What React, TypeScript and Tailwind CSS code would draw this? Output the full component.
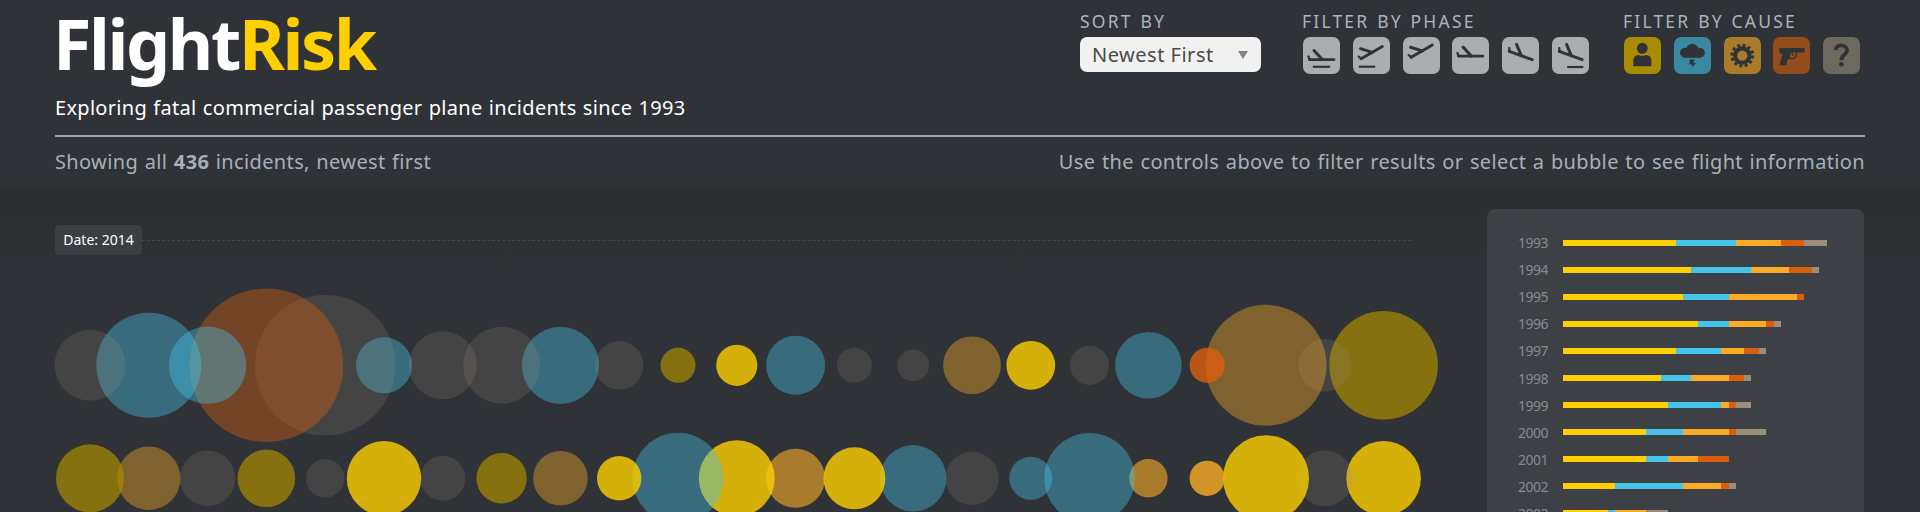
import React from 'react';

type Cause = 'human' | 'weather' | 'mechanical' | 'criminal' | 'unknown';
type Tone = Cause | 'humanDim';

interface Bubble {
  r: number;
  tone: Tone;
  opacity: number;
}

const COLORS: Record<Tone, string> = {
  human: '#ffcf00',
  humanDim: '#aa8b00',
  weather: '#45c3e8',
  mechanical: '#fbab26',
  criminal: '#d95f0e',
  unknown: '#998d7b',
};

const b = (r: number, tone: Tone, opacity: number): Bubble => ({ r, tone, opacity });

const BUBBLE_ROWS: { cy: number; items: Bubble[] }[] = [
  {
    cy: 365.3,
    items: [
      b(35.5, 'unknown', 0.2),
      b(52.5, 'weather', 0.4),
      b(38.7, 'weather', 0.4),
      b(76.8, 'criminal', 0.4),
      b(70.3, 'unknown', 0.2),
      b(28, 'weather', 0.4),
      b(34, 'unknown', 0.2),
      b(38.5, 'unknown', 0.2),
      b(38.6, 'weather', 0.4),
      b(24.2, 'unknown', 0.2),
      b(17.5, 'humanDim', 0.7),
      b(20.6, 'human', 0.8),
      b(29.5, 'weather', 0.4),
      b(17.5, 'unknown', 0.2),
      b(16, 'unknown', 0.2),
      b(28.9, 'mechanical', 0.4),
      b(24.4, 'human', 0.8),
      b(19.6, 'unknown', 0.2),
      b(33.3, 'weather', 0.4),
      b(17.6, 'criminal', 0.8),
      b(60.5, 'mechanical', 0.4),
      b(26.4, 'unknown', 0.2),
      b(54.3, 'humanDim', 0.7),
    ],
  },
  {
    cy: 478.3,
    items: [
      b(34, 'humanDim', 0.7),
      b(31.7, 'mechanical', 0.4),
      b(27.8, 'unknown', 0.2),
      b(28.8, 'humanDim', 0.7),
      b(19.2, 'unknown', 0.2),
      b(37.2, 'human', 0.8),
      b(22.5, 'unknown', 0.2),
      b(25.2, 'humanDim', 0.7),
      b(27.3, 'mechanical', 0.4),
      b(22.2, 'human', 0.8),
      b(45.5, 'weather', 0.4),
      b(38, 'human', 0.8),
      b(29.5, 'mechanical', 0.6),
      b(31, 'human', 0.8),
      b(33.2, 'weather', 0.4),
      b(26.7, 'unknown', 0.2),
      b(21.5, 'weather', 0.4),
      b(45.3, 'weather', 0.4),
      b(19.2, 'mechanical', 0.6),
      b(17.6, 'mechanical', 0.8),
      b(43, 'human', 0.8),
      b(28, 'unknown', 0.2),
      b(37.3, 'human', 0.8),
    ],
  },
];

const CAUSE_ORDER: Cause[] = ['human', 'weather', 'mechanical', 'criminal', 'unknown'];

const YEARS: { year: number; counts: number[] }[] = [
  { year: 1993, counts: [15, 8, 6, 3, 3] },
  { year: 1994, counts: [17, 8, 5, 3, 1] },
  { year: 1995, counts: [16, 6, 9, 1, 0] },
  { year: 1996, counts: [18, 4, 5, 1, 1] },
  { year: 1997, counts: [15, 6, 3, 2, 1] },
  { year: 1998, counts: [13, 4, 5, 2, 1] },
  { year: 1999, counts: [14, 7, 1, 1, 2] },
  { year: 2000, counts: [11, 5, 6, 1, 4] },
  { year: 2001, counts: [11, 3, 4, 4, 0] },
  { year: 2002, counts: [7, 9, 5, 1, 1] },
  { year: 2003, counts: [6, 1, 4, 0, 3] },
];

const UNIT = 7.55;

interface Phase {
  label: string;
  y: number;
  angle: number;
  // x start, x end, y
  runway?: [number, number, number];
}

const PHASES: Phase[] = [
  { label: 'Standing', y: 22, angle: 0, runway: [9.5, 26.5, 29] },
  { label: 'Takeoff', y: 15.2, angle: -30, runway: [5.6, 21.6, 28.9] },
  { label: 'Initial climb', y: 13.8, angle: -30 },
  { label: 'En route', y: 18.6, angle: 0 },
  { label: 'Approach', y: 18, angle: 20 },
  { label: 'Landing', y: 18, angle: 20, runway: [14.8, 30.5, 29.2] },
];

const PhaseIcon: React.FC<{ phase: Phase }> = ({ phase }) => (
  <svg viewBox="0 0 36 36" className="h-full w-full" fill="none" stroke="#2f3236">
    <g transform={`translate(18.3 ${phase.y}) rotate(${phase.angle})`}>
      <path d="M-12 0H11.8" strokeWidth="2.8" strokeLinecap="round" />
      <path d="M-11.8 0L-13-3" strokeWidth="2.2" strokeLinecap="round" />
      <path d="M0.5 0L-7.6-8.8" strokeWidth="2.9" strokeLinecap="round" />
    </g>
    {phase.runway && (
      <path d={`M${phase.runway[0]} ${phase.runway[2]}H${phase.runway[1]}`} strokeWidth="2.1" />
    )}
  </svg>
);

const CAUSE_ICONS: Record<Cause, React.ReactNode> = {
  human: (
    <>
      <circle cx="17.8" cy="11" r="5.3" />
      <path d="M9 28.5V23.5Q9 17.4 14.5 17.4Q17.8 19.2 21.2 17.4Q26.7 17.4 26.7 23.5V28.5Z" />
    </>
  ),
  weather: (
    <>
      <circle cx="10.8" cy="15.3" r="4.9" />
      <circle cx="17.8" cy="12.6" r="6" />
      <circle cx="25.2" cy="15.4" r="4.8" />
      <rect x="10.8" y="14" width="14.4" height="6.2" />
      <path d="M15.5 22H20L18.5 25H21.3L17.5 30L18 26.8H15Z" />
    </>
  ),
  mechanical: (
    <>
      <circle cx="17.8" cy="18.1" r="7" fill="none" stroke="#2f3236" strokeWidth="4" />
      <circle cx="17.8" cy="18.1" r="10.1" fill="none" stroke="#2f3236" strokeWidth="3" strokeDasharray="2.75 2.538" />
    </>
  ),
  criminal: (
    <>
      <path d="M6.2 10.8H30.8V15.2H17.5L16 21.5H14.5L12.8 27.4H6.2L9.3 17L6.2 15.5Z" />
      <path d="M15.5 20.5C20 22 23 20.5 22.8 15.2M18.5 15.2L19.5 18.3" fill="none" stroke="#2f3236" strokeWidth="1.3" />
    </>
  ),
  unknown: (
    <>
      <path d="M12.2 12.8C12.2 6.6 23.5 6.8 23.5 12.8C23.5 17.2 17.9 17 17.9 22.7" fill="none" stroke="#2f3236" strokeWidth="3.6" />
      <circle cx="17.9" cy="26.6" r="2.3" />
    </>
  ),
};

const ControlLabel: React.FC<{ children: React.ReactNode }> = ({ children }) => (
  <div className="h-[26px] text-[17.5px] leading-5 tracking-[2.2px] whitespace-nowrap text-[#adb3be] [word-spacing:1px]">
    {children}
  </div>
);

const Controls: React.FC = () => (
  <div className="flex pt-[11px]">
    <div className="w-[222px]">
      <ControlLabel>SORT BY</ControlLabel>
      <button className="flex h-[35px] w-[181px] items-center justify-between rounded-[7px] bg-[#f1f1f1] pr-[13px] pl-3 text-[20px] tracking-[0.5px] text-[#4a4a4a]">
        Newest First
        <svg viewBox="0 0 10 8" className="h-2 w-2.5" fill="#858585">
          <path d="M0 0H10L5 8Z" />
        </svg>
      </button>
    </div>
    <div className="w-[321px]">
      <ControlLabel>FILTER BY PHASE</ControlLabel>
      <div className="flex gap-[12.8px] pl-px">
        {PHASES.map((phase) => (
          <button key={phase.label} aria-label={phase.label} className="h-[37px] w-[37px] rounded-[7px] bg-[#abadaf]">
            <PhaseIcon phase={phase} />
          </button>
        ))}
      </div>
    </div>
    <div className="w-[242px]">
      <ControlLabel>FILTER BY CAUSE</ControlLabel>
      <div className="flex gap-[12.8px] pl-px">
        {CAUSE_ORDER.map((cause) => (
          <button key={cause} aria-label={cause} className="h-[37px] w-[37px]">
            <svg viewBox="0 0 36 36" className="h-full w-full" fill="#2f3236">
              {cause === 'human' ? (
                <rect width="36" height="36" rx="7" fill="#a98c03" />
              ) : (
                <rect width="36" height="36" rx="7" fill={COLORS[cause]} opacity="0.6" />
              )}
              {CAUSE_ICONS[cause]}
            </svg>
          </button>
        ))}
      </div>
    </div>
  </div>
);

const BubbleChart: React.FC = () => (
  <svg viewBox="0 260 1487 252" className="h-[252px] w-[1487px]">
    {BUBBLE_ROWS.map((row) => (
      <g key={row.cy}>
        {/* newest incident goes on top */}
        {row.items
          .map((item, i) => (
            <circle
              key={i}
              cx={90 + i * 58.8}
              cy={row.cy}
              r={item.r}
              fill={COLORS[item.tone]}
              fillOpacity={item.opacity}
            />
          ))
          .reverse()}
      </g>
    ))}
  </svg>
);

const YearPanel: React.FC = () => (
  <aside className="h-[320px] w-[377px] shrink-0 rounded-t-lg bg-[#3d4045] pt-5">
    {YEARS.map(({ year, counts }) => (
      <div key={year} className="flex h-[27.1px] items-center">
        <span className="w-[61px] text-right text-[14px] tracking-[-0.5px] text-[#878b92]">{year}</span>
        <div className="ml-[14.5px] flex h-1.5">
          {counts.map((count, i) => (
            <div key={i} style={{ width: count * UNIT, backgroundColor: COLORS[CAUSE_ORDER[i]] }} />
          ))}
        </div>
      </div>
    ))}
  </aside>
);

const App: React.FC = () => {
  return (
    <div className="h-[512px] w-[1920px] overflow-hidden bg-[#2f3236] font-['Noto_Sans','Open_Sans',sans-serif]">
      {/* Header */}
      <header className="mx-[55px] flex h-[137px] justify-between border-b-2 border-[#a0a6ab]">
        <div>
          <h1 className="-ml-[2px] h-[91px] text-[70px] leading-[86px] font-bold tracking-[-2.4px] whitespace-nowrap text-white">
            Flight<span className="text-[#ffcf00]">Risk</span>
          </h1>
          <p className="text-[20px] leading-[34px] tracking-[0.3px] whitespace-nowrap text-white [word-spacing:0.8px]">
            Exploring fatal commercial passenger plane incidents since 1993
          </p>
        </div>
        <Controls />
      </header>

      {/* Status line */}
      <div className="mx-[55px] flex h-[51px] items-center justify-between pb-[2px] text-[20px] tracking-[0.36px] whitespace-nowrap text-[#a7b0ba] [word-spacing:1px]">
        <p>
          Showing all <b>436</b> incidents, newest first
        </p>
        <p>Use the controls above to filter results or select a bubble to see flight information</p>
      </div>

      {/* Results */}
      <main className="flex h-[324px] bg-linear-to-b from-[#2b2e31] to-[#2f3236] to-30% pt-[21px]">
        <div className="w-[1487px] shrink-0">
          <div className="flex h-[51px] items-start pt-4 pl-[55px]">
            <span className="flex h-[30px] w-[87px] items-center justify-center rounded bg-[#3b3e43] pb-px text-[14px] text-white">
              Date: 2014
            </span>
            <span className="mt-[15px] w-[1269px] border-t border-dashed border-[#44474c]" />
          </div>
          <BubbleChart />
        </div>
        <YearPanel />
      </main>
    </div>
  );
};

export default App;
